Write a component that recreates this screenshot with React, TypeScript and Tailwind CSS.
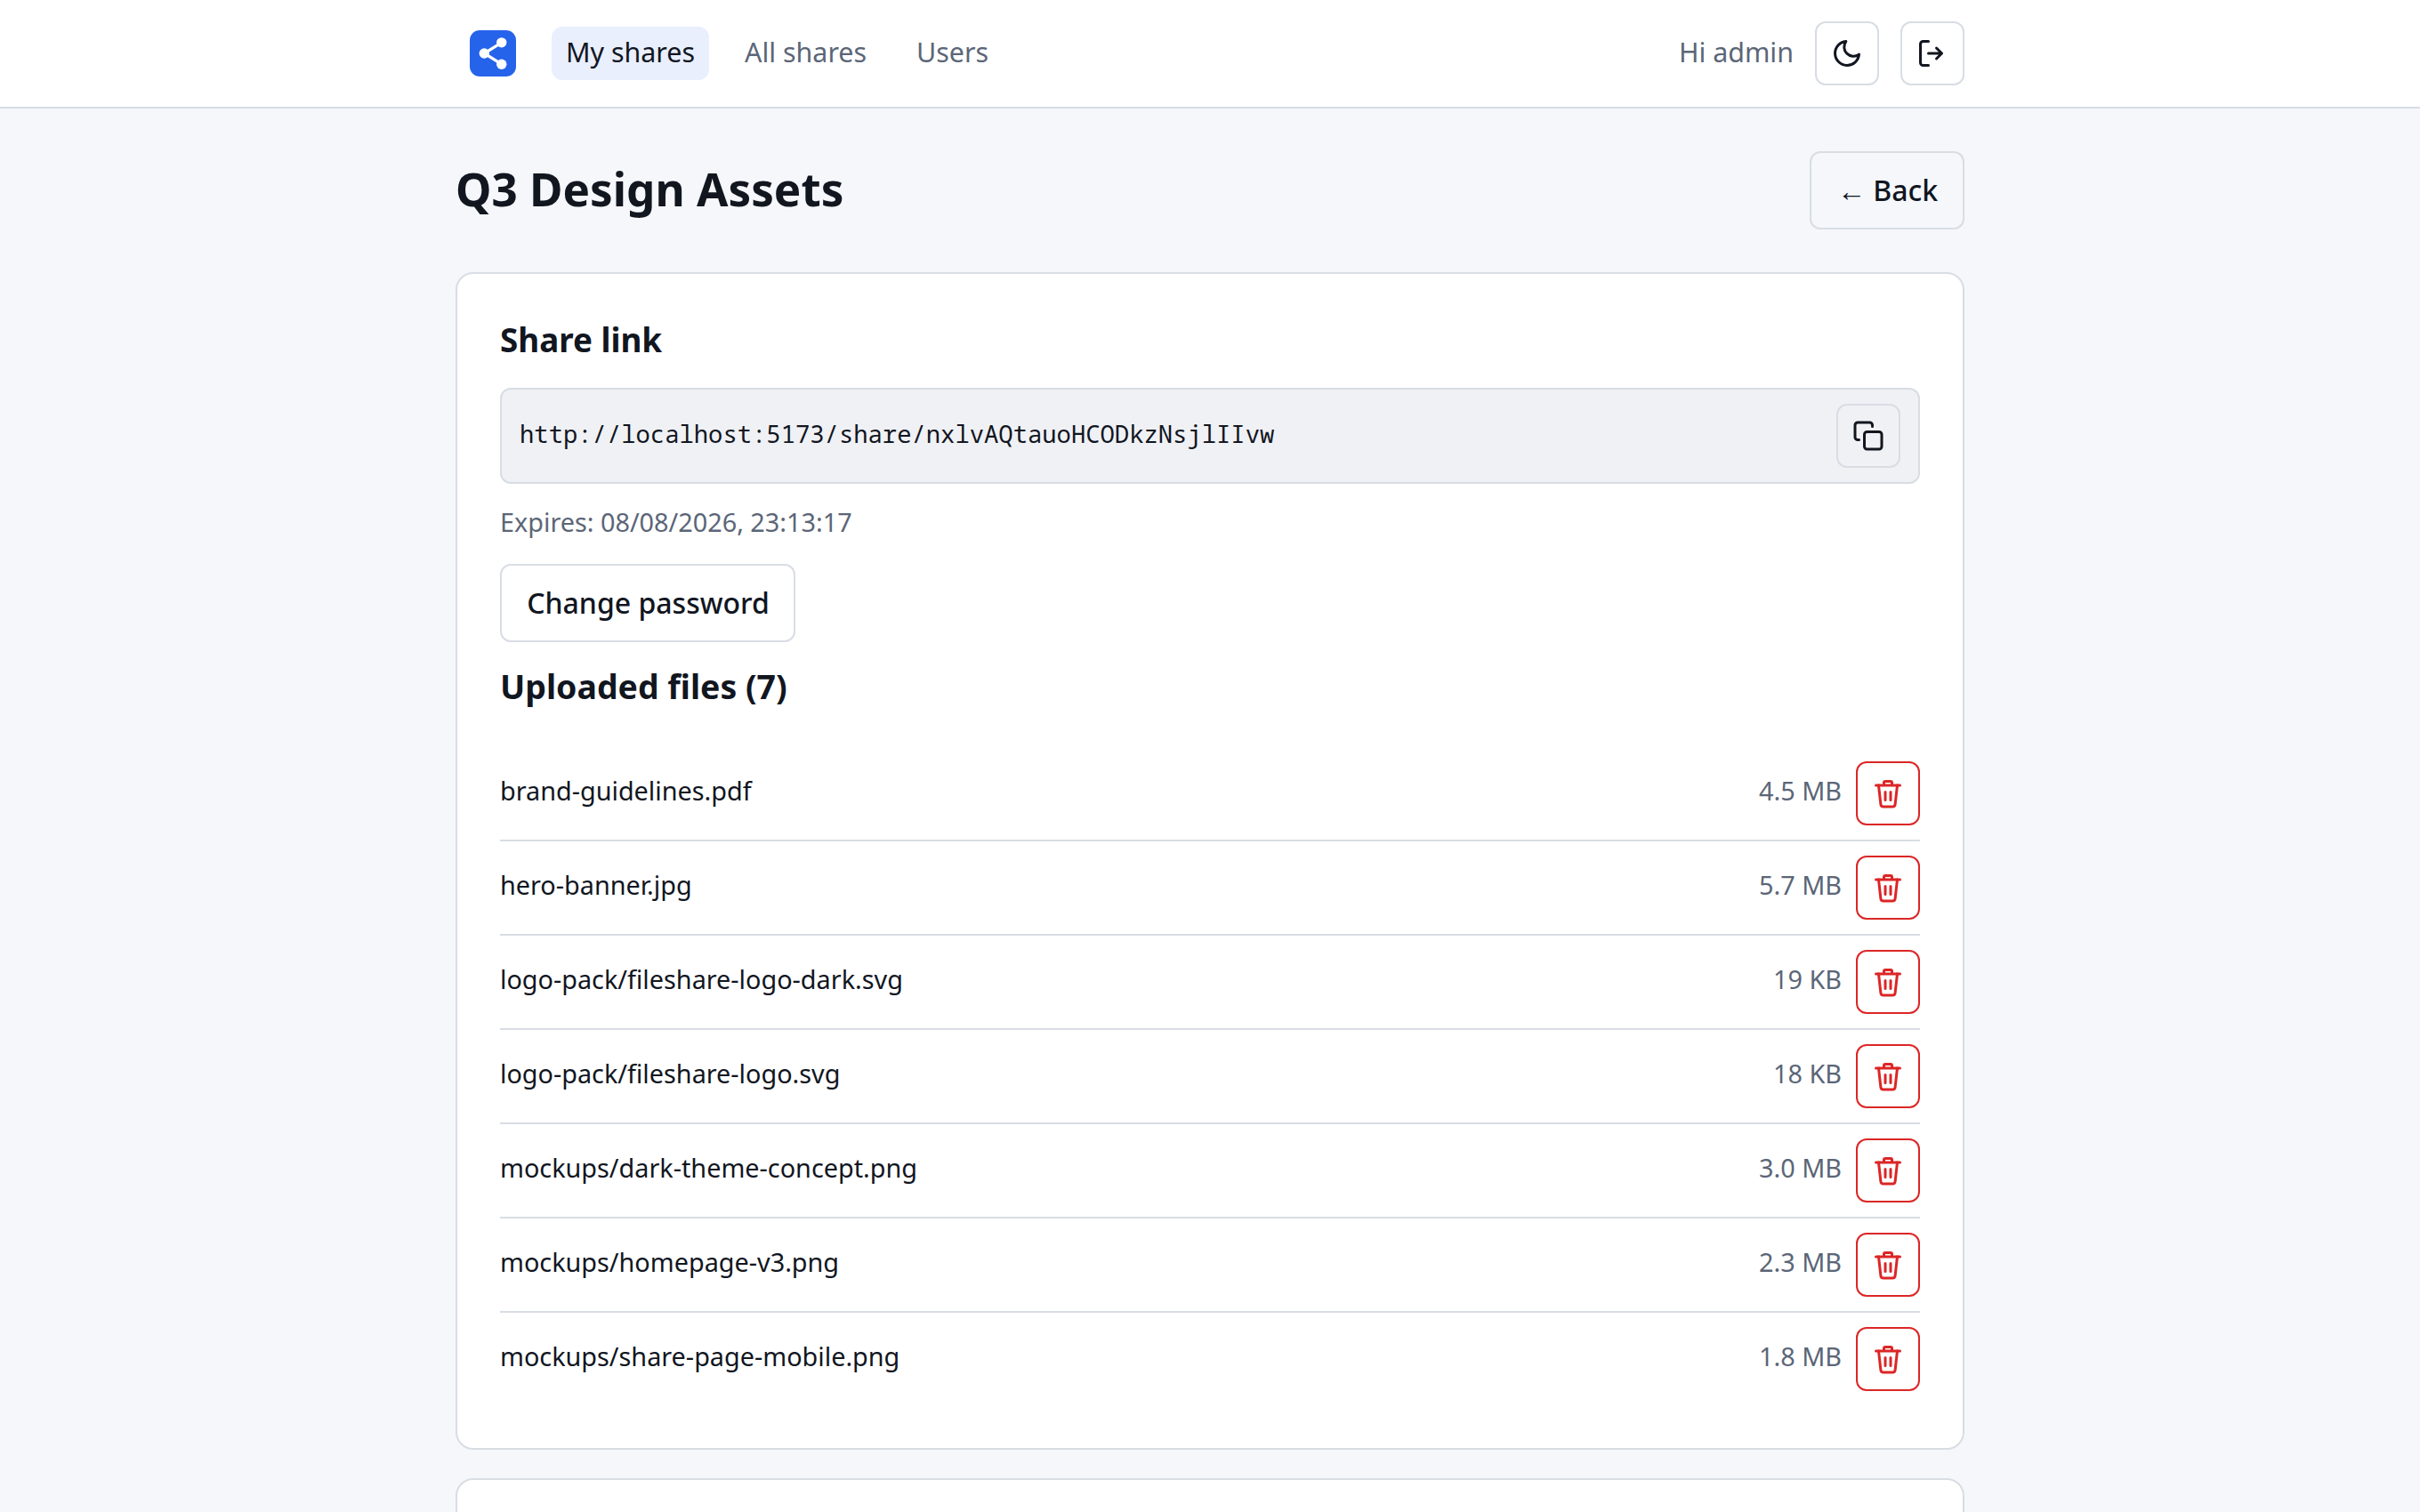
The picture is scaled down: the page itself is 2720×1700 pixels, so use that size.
import type { ReactNode } from "react";

interface SharedFile {
    name: string;
    size: string;
}

const files: SharedFile[] = [
    { name: "brand-guidelines.pdf", size: "4.5 MB" },
    { name: "hero-banner.jpg", size: "5.7 MB" },
    { name: "logo-pack/fileshare-logo-dark.svg", size: "19 KB" },
    { name: "logo-pack/fileshare-logo.svg", size: "18 KB" },
    { name: "mockups/dark-theme-concept.png", size: "3.0 MB" },
    { name: "mockups/homepage-v3.png", size: "2.3 MB" },
    { name: "mockups/share-page-mobile.png", size: "1.8 MB" },
];

function Icon({ children }: { children: ReactNode }) {
    return (
        <svg
            className="size-9 shrink-0"
            viewBox="0 0 24 24"
            fill="none"
            stroke="currentColor"
            strokeWidth="2"
            strokeLinecap="round"
            strokeLinejoin="round"
        >
            {children}
        </svg>
    );
}

function IconButton({ label, danger, children }: { label: string; danger?: boolean; children: ReactNode }) {
    return (
        <button
            aria-label={label}
            className={
                danger
                    ? "flex size-[72px] shrink-0 items-center justify-center rounded-xl border-2 border-[#dc2626] text-[#dc2626]"
                    : "flex size-[72px] shrink-0 items-center justify-center rounded-xl border-2 border-[#d8dde4]"
            }
        >
            {children}
        </button>
    );
}

function Header() {
    return (
        <header className="border-b-2 border-[#d8dde4] bg-white">
            <div className="mx-auto flex h-[120px] w-[1696px] items-center justify-between text-[30.4px]">
                <nav className="flex items-center gap-6 pl-4 text-[#5b6677]">
                    <svg className="mr-4 size-[52px]" viewBox="0 0 32 32">
                        <rect width="32" height="32" rx="7" fill="#2563eb" />
                        <path d="M22 8.5 10 16l12 7.5" fill="none" stroke="#fff" strokeWidth="2" />
                        <circle cx="22" cy="8.5" r="3.5" fill="#fff" />
                        <circle cx="10" cy="16" r="3.5" fill="#fff" />
                        <circle cx="22" cy="23.5" r="3.5" fill="#fff" />
                    </svg>
                    <a className="flex h-[60px] items-center rounded-xl bg-[#e9effd] px-4 pb-0.5 text-[#11161f]">My shares</a>
                    <a className="flex h-[60px] items-center px-4 pb-0.5">All shares</a>
                    <a className="flex h-[60px] items-center px-4 pb-0.5">Users</a>
                </nav>
                <div className="flex items-center gap-6">
                    <span className="pb-0.5 text-[#5b6677]">Hi admin</span>
                    <IconButton label="Toggle theme">
                        <Icon>
                            <path d="M21 12.79A9 9 0 1 1 11.21 3 7 7 0 0 0 21 12.79z" />
                        </Icon>
                    </IconButton>
                    <IconButton label="Log out">
                        <Icon>
                            <path d="M9 3H5a2 2 0 0 0-2 2v14a2 2 0 0 0 2 2h4" />
                            <path d="M9 12h10M15 8l4 4-4 4" />
                        </Icon>
                    </IconButton>
                </div>
            </div>
        </header>
    );
}

function FileRow({ file }: { file: SharedFile }) {
    return (
        <li className="flex items-center gap-4 border-b-2 border-[#d8dde4] py-4 text-[28.8px] last:border-b-0">
            <span className="flex-1 pb-1.5">{file.name}</span>
            <span className="pb-1.5 text-[#5b6677]">{file.size}</span>
            <IconButton label="Delete file" danger>
                <Icon>
                    <path d="M3 6h18M9 6V4a1 1 0 0 1 1-1h4a1 1 0 0 1 1 1v2" />
                    <path d="m5 6 1.6 14.2a2 2 0 0 0 2 1.8h6.8a2 2 0 0 0 2-1.8L19 6M10 11v6M14 11v6" />
                </Icon>
            </IconButton>
        </li>
    );
}

export default function App() {
    return (
        <div className="h-[1700px] overflow-hidden bg-[#f5f7fb] font-['Noto_Sans',sans-serif] text-[32px] leading-[1.5] text-[#11161f]">
            <Header />
            <main className="mx-auto w-[1696px] pt-12">
                <div className="mb-12 flex items-center justify-between">
                    <h1 className="pb-1 text-[51.2px] leading-[1.5] font-bold">Q3 Design Assets</h1>
                    <button className="h-[88px] w-[174px] rounded-xl border-2 border-[#d8dde4] pl-px font-medium whitespace-nowrap">
                        ← Back
                    </button>
                </div>

                <section className="mb-8 h-[1324px] rounded-[20px] border-2 border-[#d8dde4] bg-white px-12 pt-12">
                    <h2 className="h-[56px] text-[36.8px] leading-[52px] font-bold">Share link</h2>
                    <div className="mt-6 flex h-[108px] items-center justify-between rounded-xl border-2 border-[#d8dde4] bg-[#f0f1f5] px-5">
                        <code className="pb-1 font-['Noto_Sans_Mono','DejaVu_Sans_Mono',monospace] text-[27.2px]">
                            http://localhost:5173/share/nxlvAQtauoHCODkzNsjlIIvw
                        </code>
                        <IconButton label="Copy link">
                            <Icon>
                                <rect x="9" y="9" width="13" height="13" rx="2" />
                                <path d="M5 15H4a2 2 0 0 1-2-2V4a2 2 0 0 1 2-2h9a2 2 0 0 1 2 2v1" />
                            </Icon>
                        </IconButton>
                    </div>
                    <p className="mt-6 h-[42px] text-[28.8px] leading-[38px] text-[#5b6677]">
                        Expires: 08/08/2026, 23:13:17
                    </p>
                    <button className="mt-6 block h-[88px] w-[332px] rounded-xl border-2 border-[#d8dde4] pl-px font-medium whitespace-nowrap">
                        Change password
                    </button>
                    <h3 className="mt-6 h-[56px] text-[37.44px] leading-[52px] font-bold">Uploaded files (7)</h3>
                    <ul className="mt-[38px]">
                        {files.map((file) => (
                            <FileRow key={file.name} file={file} />
                        ))}
                    </ul>
                </section>

                <section className="h-40 rounded-[20px] border-2 border-[#d8dde4] bg-white" />
            </main>
        </div>
    );
}
